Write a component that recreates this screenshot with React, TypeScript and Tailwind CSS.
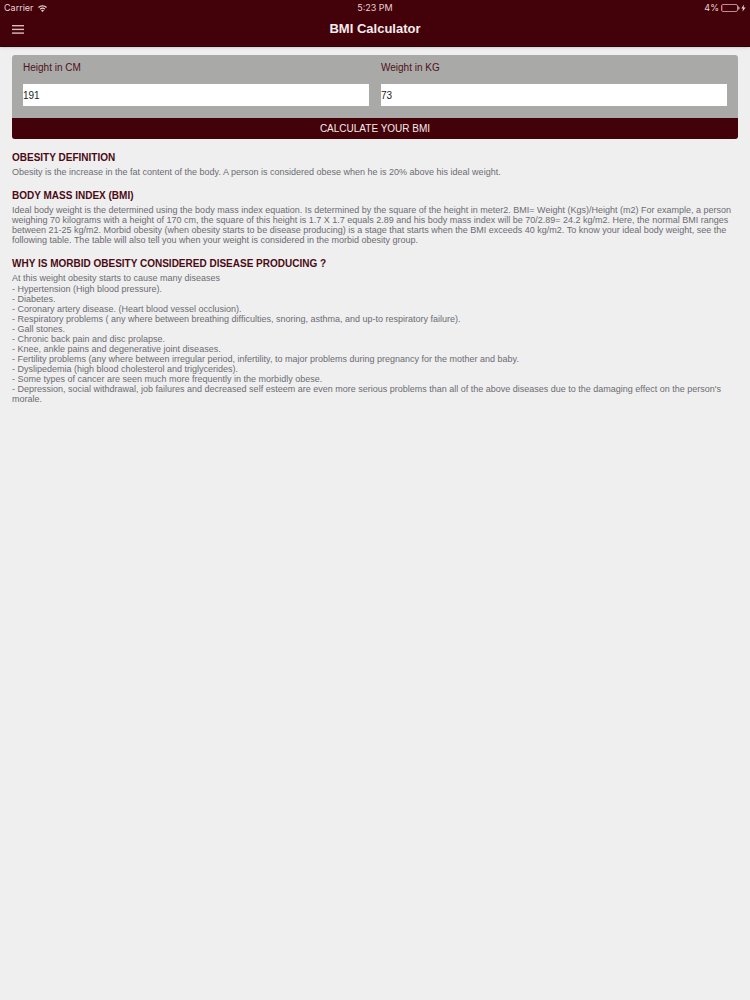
import React from "react";

const diseases = [
  "Hypertension (High blood pressure).",
  "Diabetes.",
  "Coronary artery disease. (Heart blood vessel occlusion).",
  "Respiratory problems ( any where between breathing difficulties, snoring, asthma, and up-to respiratory failure).",
  "Gall stones.",
  "Chronic back pain and disc prolapse.",
  "Knee, ankle pains and degenerative joint diseases.",
  "Fertility problems (any where between irregular period, infertility, to major problems during pregnancy for the mother and baby.",
  "Dyslipedemia (high blood cholesterol and triglycerides).",
  "Some types of cancer are seen much more frequently in the morbidly obese.",
  "Depression, social withdrawal, job failures and decreased self esteem are even more serious problems than all of the above diseases due to the damaging effect on the person's morale.",
];

const StatusBar = () => (
  <div className="grid grid-cols-3 items-center h-4 px-1 font-[Inter,sans-serif] text-[9px] leading-4 text-[#e6d3d5]">
    <div className="flex items-center gap-1">
      <span>Carrier</span>
      <svg width="9" height="7" viewBox="0 0 18 14" fill="none" stroke="currentColor" strokeWidth="2.6">
        <path d="M1 5a11.5 11.5 0 0 1 16 0" />
        <path d="M4.3 8.6a6.8 6.8 0 0 1 9.4 0" />
        <path d="M9 13.8 6 10.8a4.2 4.2 0 0 1 6 0z" fill="currentColor" stroke="none" />
      </svg>
    </div>
    <span className="text-center">5:23 PM</span>
    <div className="flex items-center justify-end gap-0.5">
      <span>4%</span>
      <svg width="25" height="8" viewBox="0 0 25 8" fill="none">
        <rect x="0.5" y="0.5" width="16" height="7" rx="1.5" stroke="#b98d92" />
        <rect x="1.2" y="1.5" width="0.8" height="5" fill="#d0202c" />
        <path d="M17.3 2.2c1.6.3 1.6 3.3 0 3.6z" fill="currentColor" />
        <path d="M23 0.5 20.3 4.5h1.7L21.4 7.8 24.6 3.5h-2z" fill="currentColor" />
      </svg>
    </div>
  </div>
);

const Header = () => (
  <header className="bg-[#430109] border-b border-[#2c0307] shadow-sm">
    <StatusBar />
    <div className="grid grid-cols-[1fr_auto_1fr] items-center h-[30px] px-3 pb-1">
      <button type="button" aria-label="Menu" className="w-3 text-[#d9bcbf]">
        <svg width="12" height="9" viewBox="0 0 12 9" fill="currentColor">
          <rect y="0" width="12" height="1.4" />
          <rect y="3.7" width="12" height="1.4" />
          <rect y="7.4" width="12" height="1.4" />
        </svg>
      </button>
      <h1 className="text-[13px] leading-4 font-bold text-[#f6ebec]">BMI Calculator</h1>
    </div>
  </header>
);

type FieldProps = { id: string; label: string; value: string };

const Field = ({ id, label, value }: FieldProps) => (
  <div className="flex-1 min-w-0">
    <label htmlFor={id} className="block text-[10px] leading-3 text-[#4f1119]">
      {label}
    </label>
    <input
      id={id}
      type="text"
      inputMode="numeric"
      defaultValue={value}
      className="block w-full h-[22px] mt-[10px] bg-white text-[10px] text-[#222] outline-none"
    />
  </div>
);

type SectionProps = { title: string; children: React.ReactNode };

const Section = ({ title, children }: SectionProps) => (
  <section>
    <h2 className="mb-[3px] text-[10px] leading-3 font-bold text-[#4b0a14]">{title}</h2>
    <div className="text-[9px] leading-[10px] text-[#6c6c70]">{children}</div>
  </section>
);

const App = () => {
  return (
    <div className="min-h-screen bg-[#efeff0] font-['Liberation_Sans',Arial,sans-serif]">
      <Header />
      <main className="px-3 pt-2">
        <form
          className="overflow-hidden rounded-[3px] bg-[#a9a9a8]"
          onSubmit={(e) => e.preventDefault()}
        >
          <div className="flex gap-3 px-[11px] pt-[7px] pb-3">
            <Field id="height" label="Height in CM" value="191" />
            <Field id="weight" label="Weight in KG" value="73" />
          </div>
          <button
            type="submit"
            className="block w-full h-[21px] bg-[#430109] text-[10px] leading-[21px] text-[#f6ebec]"
          >
            CALCULATE YOUR BMI
          </button>
        </form>

        <div className="flex flex-col gap-[13px] pt-[13px]">
          <Section title="OBESITY DEFINITION">
            <p>
              Obesity is the increase in the fat content of the body. A person is considered obese
              when he is 20% above his ideal weight.
            </p>
          </Section>
          <Section title="BODY MASS INDEX (BMI)">
            <p>
              Ideal body weight is the determined using the body mass index equation. Is determined
              by the square of the height in meter2. BMI= Weight (Kgs)/Height (m2) For example, a
              person weighing 70 kilograms with a height of 170 cm, the square of this height is 1.7
              X 1.7 equals 2.89 and his body mass index will be 70/2.89= 24.2 kg/m2. Here, the
              normal BMI ranges between 21-25 kg/m2. Morbid obesity (when obesity starts to be
              disease producing) is a stage that starts when the BMI exceeds 40 kg/m2. To know your
              ideal body weight, see the following table. The table will also tell you when your
              weight is considered in the morbid obesity group.
            </p>
          </Section>
          <Section title="WHY IS MORBID OBESITY CONSIDERED DISEASE PRODUCING ?">
            <p>At this weight obesity starts to cause many diseases</p>
            <ul className="mt-px">
              {diseases.map((disease) => (
                <li key={disease}>{`- ${disease}`}</li>
              ))}
            </ul>
          </Section>
        </div>
      </main>
    </div>
  );
};

export default App;
